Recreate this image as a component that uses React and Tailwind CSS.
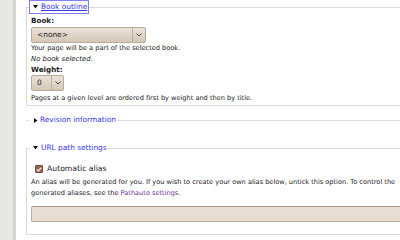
import React from 'react'

const blue = 'text-[#3535e6]'

function Chevron() {
  return (
    <svg width="6" height="4" viewBox="0 0 6 4" className="block">
      <path d="M0.5 0.5 L3 3 L5.5 0.5" fill="none" stroke="#444" strokeWidth="1" />
    </svg>
  )
}

function Select({ value, width, split }) {
  return (
    <div
      className={`flex h-[16px] items-stretch rounded-[2px] border border-[#b9aa9a] bg-gradient-to-b from-[#ebe2d8] to-[#d5c7b7] ${width}`}
    >
      <span className="flex-1 pl-[5px] text-[7.4px] leading-[14px] text-[#222]">{value}</span>
      <span className={`flex items-center justify-center border-l border-[#bfb0a0] ${split}`}>
        <Chevron />
      </span>
    </div>
  )
}

function Legend({ label, open, focused }) {
  return (
    <legend className="ml-[3px] p-0">
      <span
        className={`flex h-[12px] items-center pl-[2px] pr-[1px] ${focused ? 'outline outline-1 outline-[#8080f2]' : ''}`}
      >
        {open ? (
          <svg width="5" height="4" viewBox="0 0 5 4" className="mr-[3px] ml-[1px]">
            <path d="M0 0 H5 L2.5 3.5 Z" fill="#111" />
          </svg>
        ) : (
          <svg width="4" height="5" viewBox="0 0 4 5" className="mr-[2px] ml-[3px]">
            <path d="M0 0 V5 L3.5 2.5 Z" fill="#111" />
          </svg>
        )}
        <span className={`${blue} text-[7.4px] leading-[12px] ${focused ? 'underline' : ''}`}>{label}</span>
      </span>
    </legend>
  )
}

export default function App() {
  return (
    <div className="flex h-[240px] w-[400px] overflow-hidden bg-white font-['DejaVu_Sans',Verdana,sans-serif] text-[#222]">
      <div className="w-[13px] shrink-0 bg-[#e6e6e2]" />
      <div className="w-[3px] shrink-0 bg-[#d3d3cf]" />
      <div className="w-[440px] shrink-0 pl-[10px] pt-[1px]">
        {/* Book outline */}
        <fieldset className="m-0 border border-[#d9d9d9] p-0">
          <Legend label="Book outline" open focused />
          <div className="pl-[4px] pb-[3px]">
            <div className="mt-[3px] text-[7.2px] font-bold leading-[10px]">Book:</div>
            <div className="mt-[1px]">
              <Select value="<none>" width="w-[115px]" split="w-[13px]" />
            </div>
            <div className="mt-[1px] text-[6.6px] leading-[8px]">Your page will be a part of the selected book.</div>
            <div className="mt-[2px] text-[6.9px] italic leading-[10px]">No book selected.</div>
            <div className="mt-[1px] text-[7.2px] font-bold leading-[10px]">Weight:</div>
            <Select value="0" width="w-[33px]" split="w-[12px]" />
            <div className="mt-[3px] text-[6.6px] leading-[8px]">
              Pages at a given level are ordered first by weight and then by title.
            </div>
          </div>
        </fieldset>

        {/* Revision information (collapsed) */}
        <fieldset className="m-0 mt-[8px] border-0 border-t border-[#d9d9d9] p-0">
          <Legend label="Revision information" />
        </fieldset>

        {/* URL path settings */}
        <fieldset className="m-0 mt-[16px] border border-[#d9d9d9] p-0">
          <Legend label="URL path settings" open />
          <div className="pl-[4px] pb-[12px]">
            <div className="mt-[10px] flex h-[10px] items-center">
              <span className="ml-[4px] flex h-[8px] w-[8px] items-center justify-center rounded-[1px] border border-[#7a4a3c] bg-[#98624f]">
                <svg width="6" height="5" viewBox="0 0 6 5">
                  <path d="M0.8 2.5 L2.3 4 L5.3 0.8" fill="none" stroke="#f3e6df" strokeWidth="1.3" />
                </svg>
              </span>
              <span className="ml-[4px] text-[7.7px] leading-[10px]">Automatic alias</span>
            </div>
            <div className="mt-[3px] whitespace-nowrap text-[6.6px] leading-[11px]">
              An alias will be generated for you. If you wish to create your own alias below, untick this option. To control the
              <br />
              generated aliases, see the <span className="text-[#72319c]">Pathauto settings</span>.
            </div>
            <div className="mt-[7px] h-[16px] w-[420px] rounded-[2px] border border-[#bcad9f] border-t-[#a9998a] bg-[#e7ddd3]" />
          </div>
        </fieldset>
      </div>
    </div>
  )
}
